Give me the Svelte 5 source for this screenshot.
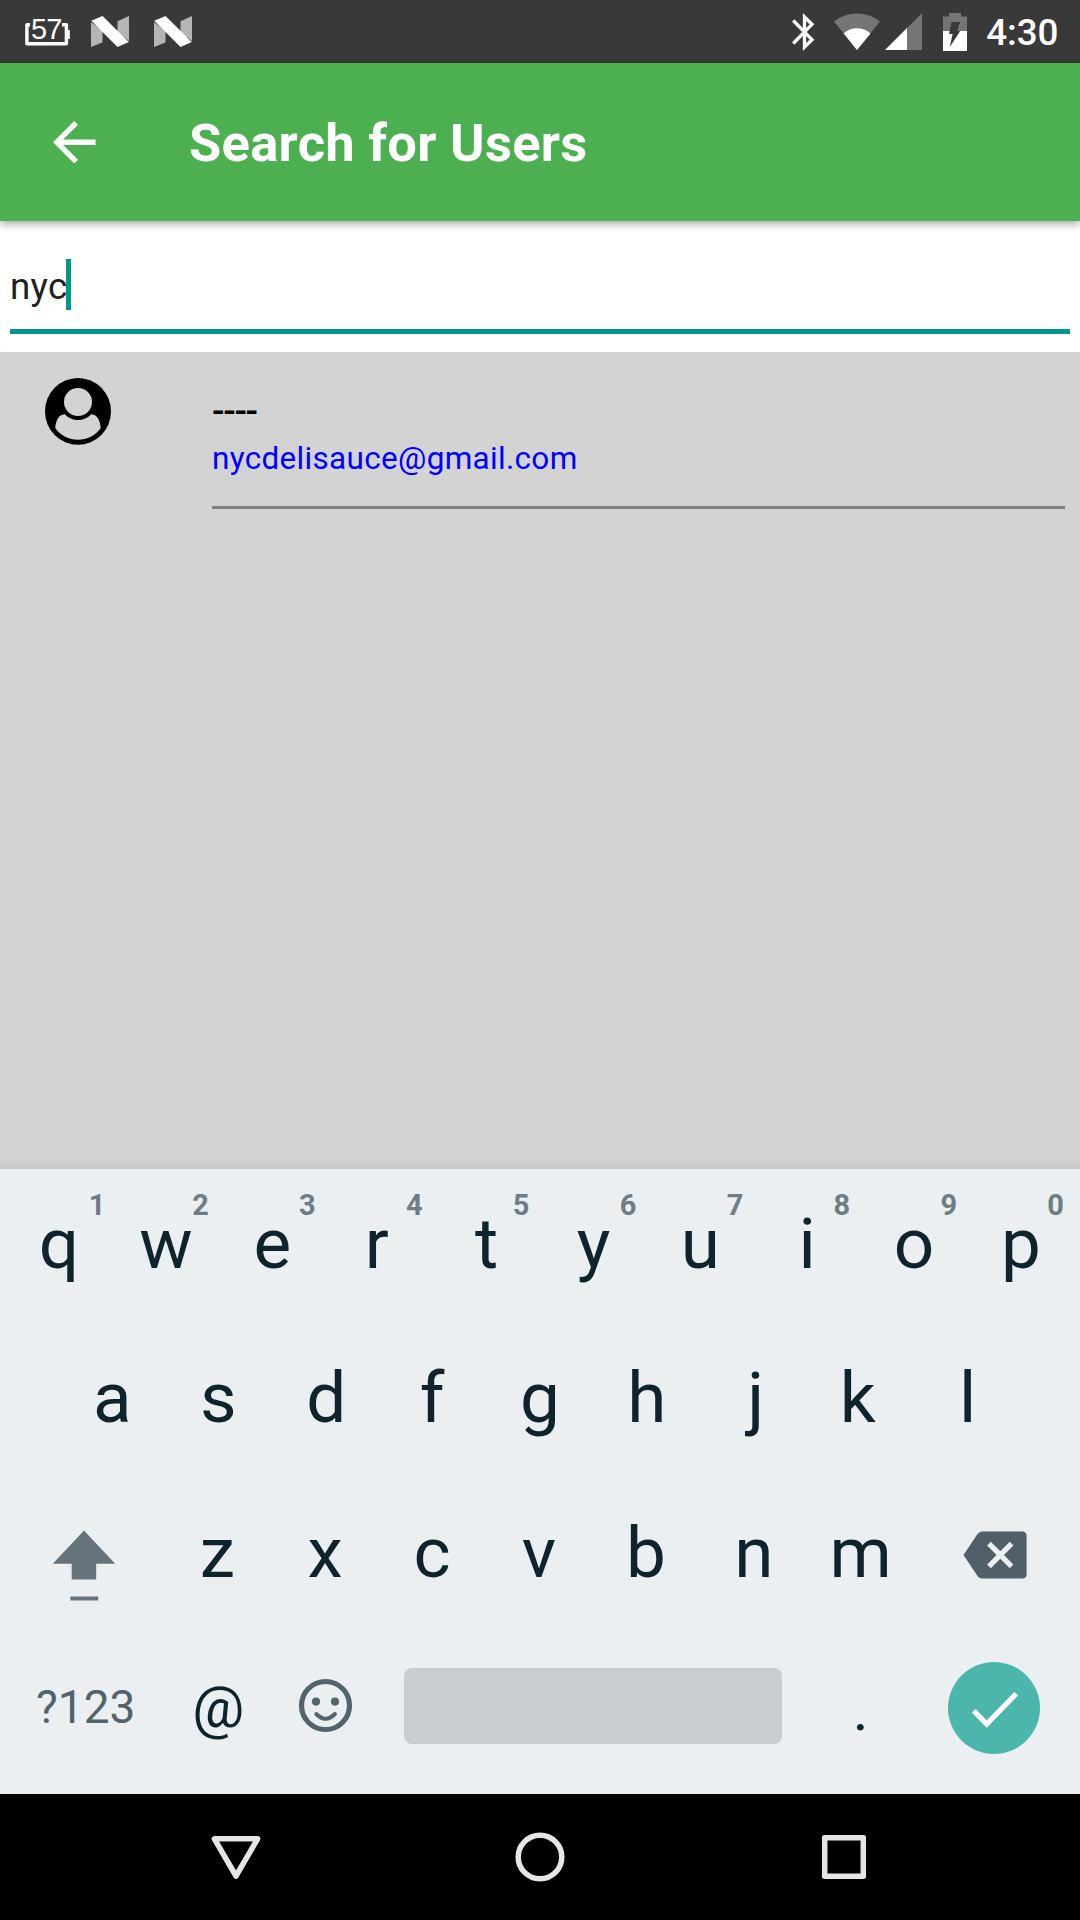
<script lang="ts">
  const topRow = 'qwertyuiop'.split('');
  const homeRow = 'asdfghjkl'.split('');
  const lowRow = 'zxcvbnm'.split('');
  const hint = (i: number) => (i + 1) % 10;
  const nudge: Record<string, number> = { r: -3, j: 2, k: -3, z: -2, f: -1, s: -1, x: -1, c: -1, v: -1, b: -1, e: -0.5 };
</script>

{#snippet nougat()}
  <svg class="nougat" viewBox="0 0 38 31">
    <path fill="#b5b5b5" d="M0 6 11.500 15V26.500L0 31ZM38 0V25L26.500 16V5.300Z" />
    <path fill="#fff" d="M.3 4.800 11.500 0 37.800 26 26.500 31Z" />
  </svg>
{/snippet}

{#snippet letter(k: string)}
  <span style:translate="{nudge[k] ?? 0}px 0">{k}</span>
{/snippet}

<div class="screen">
  <header class="status">
    <div class="battery-level">
      <svg viewBox="0 0 45 23" fill="none" stroke="#fff">
        <path stroke-width="3.400" stroke-linejoin="round" d="M6 1.800H1.900V20.800H41.400V1.800H37" />
        <path stroke-width="3" d="M43.300 7V16" />
      </svg>
      <span>57</span>
    </div>
    {@render nougat()}
    {@render nougat()}
    <div class="grow"></div>
    <svg class="bt" viewBox="0 0 23 38" fill="none" stroke="#fff" stroke-width="3.300">
      <path d="M1.200 7.500 20 26.700 12.500 34V4L20 11.300 1.200 30.500" />
    </svg>
    <svg class="wifi" viewBox="0 0 46 37">
      <path fill="#757575" d="M0 8.500A37 37 0 0 1 46 8.500L23 37Z" />
      <path fill="#fff" d="M9.700 20.500A19.500 19.500 0 0 1 36.500 20.500L23 37Z" />
    </svg>
    <svg class="signal" viewBox="0 0 37 37">
      <path fill="#757575" d="M0 37 37 0V37Z" />
      <path fill="#fff" d="M0 37 22 15V37Z" />
    </svg>
    <svg class="charge" viewBox="0 0 24 38">
      <path fill="#757575" d="M0 3.500H6V0H18V3.500H24V18H0Z" />
      <path fill="#fff" d="M0 18H24V38H0Z" />
      <path fill="#393939" d="M8.500 9H17L14.300 18H17.200L6.800 34 9.600 21H6Z" />
    </svg>
    <time>4:30</time>
  </header>

  <div class="appbar">
    <svg class="back" viewBox="4 4 16 16">
      <path fill="#fff" d="M20 11H7.830l5.590-5.590L12 4l-8 8 8 8 1.410-1.410L7.830 13H20v-2z" />
    </svg>
    <h1>Search for Users</h1>
  </div>

  <div class="search-wrap">
    <div class="search">
      <div class="field"><span>nyc</span><i class="caret"></i></div>
    </div>
  </div>

  <main>
    <div class="row">
      <svg class="avatar" viewBox="0 0 66 67">
        <ellipse cx="33" cy="33.400" rx="33" ry="33.400" />
        <g fill="#d3d3d3">
          <circle cx="33" cy="24" r="14" />
          <path d="M10.200 50C11 43 13 36.500 19.800 36.200A17.800 17.800 0 0 0 46.200 36.200C53 36.500 55 43 55.800 50A28 28 0 0 1 10.200 50Z" />
        </g>
      </svg>
      <div class="details">
        <div class="name">----</div>
        <div class="email">nycdelisauce@gmail.com</div>
      </div>
    </div>
  </main>

  <section class="keyboard">
    <div class="keys">
      {#each topRow as k, i}
        <div class="key">{@render letter(k)}<sup class:one={i === 0}>{hint(i)}</sup></div>
      {/each}
    </div>
    <div class="keys home">
      {#each homeRow as k}
        <div class="key">{@render letter(k)}</div>
      {/each}
    </div>
    <div class="keys">
      <div class="key wide">
        <svg class="shift" viewBox="0 0 66 100" fill="#67737a">
          <path d="M32 28.500 63.200 61.700H44.200V77.500H19.700V61.700H.8Z" />
          <path d="M18.400 94.500H46.200V98.500H18.400Z" />
        </svg>
      </div>
      {#each lowRow as k}
        <div class="key">{@render letter(k)}</div>
      {/each}
      <div class="key wide">
        <svg class="delete" viewBox="0 0 64 60">
          <path fill="#515f68" d="M.5 33 14.500 12Q16.200 9.500 19 9.500H59Q63.600 9.500 63.600 14V52Q63.600 56.500 59 56.500H19Q16.200 56.500 14.500 54Z" />
          <path fill="none" stroke="#ebeff2" stroke-width="5.200" d="M26 21.600 48.600 44.400M48.600 21.600 26 44.400" />
        </svg>
      </div>
    </div>
    <div class="keys">
      <div class="key wide symbols">?123</div>
      <div class="key at">@</div>
      <div class="key">
        <svg class="emoji" viewBox="0 0 60 60" fill="none" stroke="#53636b">
          <circle cx="29.500" cy="28.500" r="24" stroke-width="5.200" />
          <g fill="#53636b" stroke="none">
            <circle cx="20" cy="24.600" r="4.100" />
            <circle cx="39" cy="24.600" r="4.100" />
          </g>
          <path stroke-width="4" stroke-linecap="round" d="M20.300 37Q29.500 46.500 38.900 37" />
        </svg>
      </div>
      <div class="space"></div>
      <div class="key dot">.</div>
      <div class="key wide">
        <svg class="enter" viewBox="0 0 92 92">
          <circle cx="46" cy="46" r="46" fill="#4db6ac" />
          <path fill="none" stroke="#fff" stroke-width="5.200" d="M25.700 48.700 38.700 62 68.200 31.700" />
        </svg>
      </div>
    </div>
  </section>

  <nav>
    <svg viewBox="0 0 60 60"><path d="M8.400 11.800H51.600L30 49Z" /></svg>
    <svg viewBox="0 0 60 60"><circle cx="30" cy="30" r="21.800" /></svg>
    <svg viewBox="0 0 60 60"><rect x="10.700" y="10.700" width="38.600" height="38.600" /></svg>
  </nav>
</div>

<style>
  :global(body) {
    margin: 0;
  }
  .screen {
    width: 1080px;
    height: 1920px;
    display: flex;
    flex-direction: column;
    overflow: hidden;
    font-family: Roboto, sans-serif;
    background: #d3d3d3;
  }
  svg {
    display: block;
    flex: none;
  }

  /* Status bar */
  .status {
    height: 63px;
    flex: none;
    display: flex;
    align-items: center;
    box-sizing: border-box;
    padding: 0 21.500px 0 25px;
    background: #393939;
    color: #fff;
  }
  .grow {
    flex: 1;
  }
  .battery-level {
    position: relative;
    width: 45px;
    height: 23px;
    margin: 5px 21px 0 0;
  }
  .battery-level svg {
    width: 45px;
    height: 23px;
  }
  .battery-level span {
    position: absolute;
    left: 5px;
    top: -8px;
    padding: 0 1px;
    background: #393939;
    font: 29px/28px 'Liberation Sans', sans-serif;
    height: 25px;
    letter-spacing: -1px;
  }
  .nougat {
    width: 38px;
    height: 31px;
    margin-right: 25px;
  }
  .bt {
    width: 23px;
    height: 38px;
    margin-right: 19px;
  }
  .wifi {
    width: 46px;
    height: 37px;
    margin-right: 5px;
  }
  .signal {
    width: 37px;
    height: 37px;
    margin-right: 21px;
  }
  .charge {
    width: 24px;
    height: 38px;
    margin-right: 19px;
  }
  time {
    font-size: 36.750px;
    font-weight: 500;
    line-height: 63px;
    padding-top: 2px;
  }

  /* App bar */
  .appbar {
    position: relative;
    z-index: 1;
    height: 158px;
    flex: none;
    display: flex;
    align-items: center;
    padding-left: 53px;
    background: #4caf50;
    box-shadow: 0 3px 8px rgba(0, 0, 0, 0.35);
  }
  .back {
    width: 42.500px;
    height: 42.500px;
    margin-right: 93.500px;
  }
  h1 {
    margin: 0;
    padding-top: 2px;
    font-size: 52.500px;
    font-weight: 700;
    line-height: 60px;
    letter-spacing: 0.28px;
    color: #fff;
  }

  /* Search field */
  .search-wrap {
    flex: none;
    background: #f0f8ff;
  }
  .search {
    height: 131px;
    box-sizing: border-box;
    padding: 38px 10px 0;
    border-radius: 0 0 0 5px;
    background: #fff;
  }
  .field {
    display: flex;
    height: 70px;
    border-bottom: 5px solid #009688;
    font-size: 36.750px;
    line-height: 56px;
    letter-spacing: 0.3px;
    color: #212121;
  }
  .caret {
    width: 5px;
    height: 51px;
    margin-left: -2px;
    background: #009688;
  }

  /* Results */
  main {
    flex: 1;
    background: linear-gradient(rgba(0, 0, 0, 0), rgba(0, 0, 0, 0.05)) bottom / 100% 12px no-repeat #d3d3d3;
  }
  .row {
    display: flex;
    padding: 26px 15px 0 45px;
  }
  .avatar {
    width: 66px;
    height: 67px;
  }
  .details {
    flex: 1;
    height: 128px;
    margin-left: 101px;
    border-bottom: 3px solid #808080;
  }
  .name {
    padding-top: 12px;
    font-size: 36.750px;
    font-weight: 500;
    line-height: 43px;
    letter-spacing: -1.300px;
    color: #000;
  }
  .email {
    padding-top: 7px;
    font-size: 31.500px;
    line-height: 37px;
    letter-spacing: 0.310px;
    color: #00f;
  }

  /* Keyboard */
  .keyboard {
    height: 625px;
    flex: none;
    display: flex;
    flex-direction: column;
    gap: 5.500px;
    background: #ebeff2;
    color: #0f232d;
    font-size: 71px;
  }
  .keys {
    display: flex;
    justify-content: center;
    height: 149px;
    line-height: 149px;
  }
  .home .key {
    padding-bottom: 2px;
    height: 147px;
  }
  .key {
    position: relative;
    width: 106.900px;
    flex: none;
    display: flex;
    align-items: center;
    justify-content: center;
  }
  .wide {
    width: 160.350px;
  }
  sup {
    position: absolute;
    right: 10.500px;
    top: 19px;
    font-size: 29px;
    font-weight: 700;
    line-height: 34px;
    color: #707c83;
  }
  sup.one {
    right: 7px;
  }
  .shift {
    width: 66px;
    height: 100px;
    margin: 0 1px 1px 0;
  }
  .delete {
    width: 64px;
    height: 60px;
    margin: 0 0 1px 1px;
  }
  .symbols {
    font-size: 46px;
    color: #53636b;
  }
  .at {
    font-size: 58px;
    left: -1px;
  }
  .dot {
    font-size: 60px;
    padding-top: 5px;
    height: 144px;
  }
  .emoji {
    width: 60px;
    height: 60px;
  }
  .space {
    width: 378px;
    height: 76px;
    margin: 35px 24.800px 0;
    border-radius: 8px;
    background: #c9cdd0;
  }
  .enter {
    width: 92px;
    height: 92px;
    margin-top: 2px;
  }

  /* Navigation bar */
  nav {
    height: 126px;
    flex: none;
    display: flex;
    align-items: center;
    justify-content: center;
    gap: 244px;
    background: #000;
  }
  nav svg {
    width: 60px;
    height: 60px;
    fill: none;
    stroke: #e6e6e6;
    stroke-width: 5.500;
    stroke-linejoin: round;
  }
</style>
